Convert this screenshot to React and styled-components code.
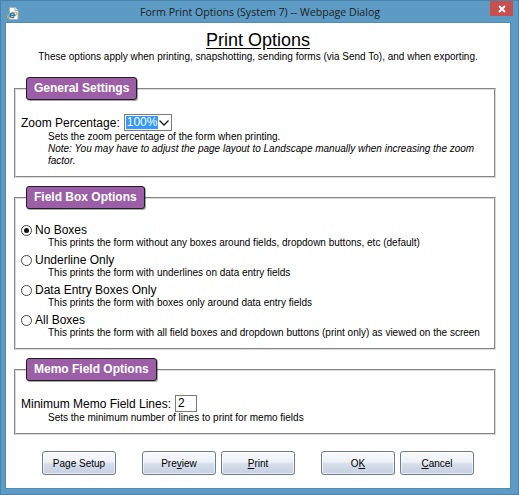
import styled, { createGlobalStyle } from 'styled-components';

const FIELD_BOX_OPTIONS = [
  {
    label: 'No Boxes',
    hint: 'This prints the form without any boxes around fields, dropdown buttons, etc (default)',
    checked: true,
  },
  { label: 'Underline Only', hint: 'This prints the form with underlines on data entry fields' },
  { label: 'Data Entry Boxes Only', hint: 'This prints the form with boxes only around data entry fields' },
  {
    label: 'All Boxes',
    hint: 'This prints the form with all field boxes and dropdown buttons (print only) as viewed on the screen',
  },
];

export default function App() {
  return (
    <>
      <GlobalStyle />
      <Window>
        <TitleBar>
          <IeIcon />
          <Title>Form Print Options (System 7) -- Webpage Dialog</Title>
          <CloseButton type="button" aria-label="Close">
            <svg width="8" height="8" viewBox="0 0 8 8">
              <path d="M1 1l6 6M7 1L1 7" stroke="#fff" strokeWidth="1.8" />
            </svg>
          </CloseButton>
        </TitleBar>

        <Client>
          <Header>
            <Heading>Print Options</Heading>
            <Intro>
              These options apply when printing, snapshotting, sending forms (via Send To), and when exporting.
            </Intro>
          </Header>

          <Groups>
            <Group>
              <Legend>General Settings</Legend>
              <FieldRow>
                Zoom Percentage:
                <FakeSelect>
                  <SelectedValue>100%</SelectedValue>
                  <svg width="12" height="8" viewBox="0 0 12 8">
                    <path d="M1.5 1.5l4.5 4.5 4.5-4.5" fill="none" stroke="#1a1a1a" strokeWidth="1.3" />
                  </svg>
                </FakeSelect>
              </FieldRow>
              <Hint>Sets the zoom percentage of the form when printing.</Hint>
              <Hint $italic>
                Note: You may have to adjust the page layout to Landscape manually when increasing the zoom factor.
              </Hint>
            </Group>

            <Group>
              <Legend>Field Box Options</Legend>
              <OptionList>
                {FIELD_BOX_OPTIONS.map((opt) => (
                  <Option key={opt.label}>
                    <OptionLabel>
                      <RadioMark $checked={opt.checked} />
                      {opt.label}
                    </OptionLabel>
                    <Hint>{opt.hint}</Hint>
                  </Option>
                ))}
              </OptionList>
            </Group>

            <Group>
              <Legend>Memo Field Options</Legend>
              <FieldRow>
                Minimum Memo Field Lines:
                <SmallInput>2</SmallInput>
              </FieldRow>
              <Hint>Sets the minimum number of lines to print for memo fields</Hint>
            </Group>
          </Groups>

          <ButtonBar>
            <ButtonGroup>
              <DialogButton type="button">Page Setup</DialogButton>
            </ButtonGroup>
            <ButtonGroup>
              <DialogButton type="button">
                Pre<u>v</u>iew
              </DialogButton>
              <DialogButton type="button">
                <u>P</u>rint
              </DialogButton>
            </ButtonGroup>
            <ButtonGroup>
              <DialogButton type="button">
                O<u>K</u>
              </DialogButton>
              <DialogButton type="button">
                <u>C</u>ancel
              </DialogButton>
            </ButtonGroup>
          </ButtonBar>
        </Client>
      </Window>
    </>
  );
}

function IeIcon() {
  return (
    <IconWrap>
      <svg width="12" height="13" viewBox="0 0 12 13">
        <path d="M2.5 0.5h5.5l3 3v9h-8.5z" fill="#fff" stroke="#9fb0c2" />
        <path d="M8 0.5v3h3" fill="#e6ecf2" stroke="#9fb0c2" />
        <ellipse
          cx="5.2"
          cy="8.2"
          rx="5"
          ry="1.9"
          fill="none"
          stroke="#f0b429"
          strokeWidth="1.1"
          transform="rotate(-28 5.2 8.2)"
        />
        <path
          d="M3 8.3h4.6a2.3 2.3 0 1 0-0.7 1.7M3.1 8.3a2.3 2.3 0 0 0 3.9 1.6"
          fill="none"
          stroke="#1b7bd0"
          strokeWidth="1.4"
        />
      </svg>
    </IconWrap>
  );
}

const GlobalStyle = createGlobalStyle`
  html, body {
    margin: 0;
    padding: 0;
    background: #5d9bc5;
  }
  body {
    font-family: 'Liberation Sans', Arial, sans-serif;
    color: #000;
  }
`;

const Window = styled.div`
  width: 519px;
  height: 495px;
  box-sizing: border-box;
  display: flex;
  flex-direction: column;
  background: #5d9bc5;
  border: 1px solid #4a84ae;
`;

const TitleBar = styled.div`
  height: 22px;
  flex: none;
  display: grid;
  grid-template-columns: 1fr auto 1fr;
  align-items: center;
`;

const IconWrap = styled.span`
  display: flex;
  padding-left: 6px;
  padding-top: 2px;
`;

const Title = styled.span`
  font-family: 'Open Sans', 'Noto Sans', sans-serif;
  font-size: 10.6px;
  color: #1c1c1c;
  white-space: nowrap;
  padding-left: 1px;
`;

const CloseButton = styled.button`
  justify-self: end;
  align-self: start;
  width: 23px;
  height: 15px;
  margin-right: 5px;
  padding: 0;
  border: none;
  background: #c7504f;
  display: flex;
  align-items: center;
  justify-content: center;
`;

const Client = styled.div`
  flex: 1;
  margin: 0 8px 6px 5px;
  background: #fff;
  box-shadow: 0 0 0 1px #4f8bb6;
  display: flex;
  flex-direction: column;
`;

const Header = styled.div`
  padding-top: 7px;
  text-align: center;
`;

const Heading = styled.h1`
  margin: 0;
  font-size: 18px;
  font-weight: normal;
  line-height: 21px;
  text-decoration: underline;
  text-underline-offset: 2px;
`;

const Intro = styled.p`
  margin: 0;
  font-size: 10px;
  line-height: 12px;
`;

const Groups = styled.div`
  display: flex;
  flex-direction: column;
  gap: 8px;
  margin: 14px 14px 0 8px;
`;

const Group = styled.fieldset`
  margin: 0;
  min-width: 0;
  padding: 14px 5px 9px 5px;
  border: 2px groove #dadada;
`;

const Legend = styled.legend`
  margin-left: 5px;
  padding: 3px 7px;
  font-size: 12px;
  font-weight: bold;
  line-height: 15px;
  color: #fff;
  background: #9c5fa7;
  border: 1px solid #1e1e1e;
  border-radius: 3px;
  box-shadow: 1px 1px 0 rgba(0, 0, 0, 0.35);
`;

const FieldRow = styled.div`
  display: flex;
  align-items: center;
  gap: 4px;
  height: 17px;
  font-size: 12px;
`;

const FakeSelect = styled.span`
  display: inline-flex;
  align-items: center;
  box-sizing: border-box;
  height: 17px;
  padding: 1px 1px 1px 1px;
  border: 1px solid #7a7a7a;
  background: #fff;
`;

const SelectedValue = styled.span`
  padding: 0 1px;
  font-size: 12px;
  line-height: 13px;
  color: #fff;
  background: #3399ff;
`;

const SmallInput = styled.span`
  box-sizing: border-box;
  width: 22px;
  height: 17px;
  padding: 1px 2px;
  border: 1px solid #7a7a7a;
  font-size: 12px;
  line-height: 13px;
`;

const Hint = styled.p`
  margin: 0;
  padding-left: 27px;
  font-size: 10px;
  line-height: 12px;
  font-style: ${(p) => (p.$italic ? 'italic' : 'normal')};
`;

const OptionList = styled.div`
  display: flex;
  flex-direction: column;
  gap: 4px;
`;

const Option = styled.div`
  display: flex;
  flex-direction: column;
`;

const OptionLabel = styled.label`
  display: flex;
  align-items: center;
  gap: 3px;
  font-size: 12px;
  line-height: 14px;
`;

const RadioMark = styled.span`
  position: relative;
  box-sizing: border-box;
  width: 11px;
  height: 11px;
  border: 1px solid #444;
  border-radius: 50%;
  background: #fff;

  &::after {
    content: '';
    display: ${(p) => (p.$checked ? 'block' : 'none')};
    position: absolute;
    left: 2px;
    top: 2px;
    width: 5px;
    height: 5px;
    border-radius: 50%;
    background: #111;
  }
`;

const ButtonBar = styled.div`
  display: flex;
  justify-content: center;
  gap: 26px;
  margin-top: 16px;
`;

const ButtonGroup = styled.div`
  display: flex;
  gap: 5px;
`;

const DialogButton = styled.button`
  width: 74px;
  height: 24px;
  padding: 0;
  font-family: 'Liberation Sans', Arial, sans-serif;
  font-size: 10px;
  color: #000;
  border: 1px solid #6f7a8e;
  border-radius: 3px;
  background: linear-gradient(#f9fafd 0%, #edf1f7 45%, #d6deeb 55%, #c4cfe1 100%);
  box-shadow: inset 0 0 0 1px rgba(255, 255, 255, 0.65);

  u {
    text-underline-offset: 1px;
  }
`;
